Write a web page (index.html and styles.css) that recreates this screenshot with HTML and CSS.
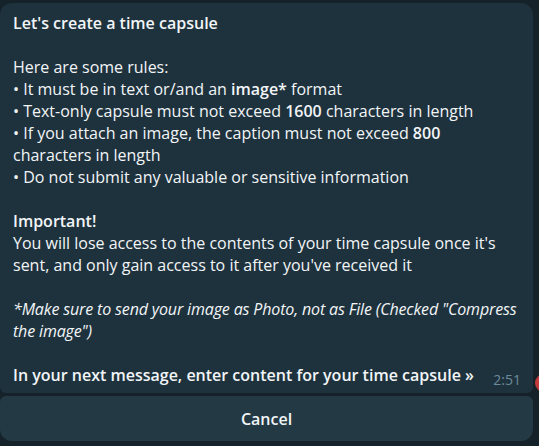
FILE: index.html
```html
<!DOCTYPE html>
<html>
<head>
<meta charset="utf-8">
<link rel="stylesheet" href="styles.css">
</head>
<body>
<div class="chat">
  <div class="msg">
    <div class="bubble">
      <div class="text"><b>Let's create a time capsule</b>

Here are some rules:
• It must be in text or/and an <b>image*</b> format
• Text-only capsule must not exceed <b>1600</b> characters in length
• If you attach an image, the caption must not exceed <b>800</b> characters in length
• Do not submit any valuable or sensitive information

<b>Important!</b>
You will lose access to the contents of your time capsule once it's sent, and only gain access to it after you've received it

<i>*Make sure to send your image as Photo, not as File (Checked "Compress
the image")</i>

<b>In your next message, enter content for your time capsule »</b></div>
      <span class="time">2:51</span>
    </div>
    <div class="keyboard">
      <button class="kbtn">Cancel</button>
    </div>
  </div>
  <div class="side"><span class="dot"></span></div>
</div>
</body>
</html>
```

FILE: styles.css
```css
html, body {
  margin: 0;
  padding: 0;
  background: #15222a;
  width: 539px;
  height: 446px;
  overflow: hidden;
}
.chat {
  display: flex;
  padding-top: 3px;
}
.msg {
  width: 533px;
  display: flex;
  flex-direction: column;
  gap: 3px;
}
.bubble {
  position: relative;
  background: #1e323d;
  border-radius: 12px 12px 6px 6px;
  padding: 9px 12px 7px 13px;
  font-family: "Open Sans", sans-serif;
  font-size: 16px;
  line-height: 22px;
  color: #f2f5f7;
}
.text {
  white-space: pre-wrap;
}
.text b {
  font-weight: 600;
}
.text i {
  letter-spacing: -0.15px;
}
.time {
  position: absolute;
  right: 12px;
  bottom: 2px;
  font-family: "Open Sans", sans-serif;
  font-size: 14px;
  color: #6c8a99;
}
.keyboard {
  display: flex;
}
.kbtn {
  flex: 1;
  height: 45px;
  border: none;
  background: #233944;
  border-radius: 6px 6px 12px 12px;
  font-family: "Open Sans", sans-serif;
  font-size: 16px;
  font-weight: 600;
  color: #f2f5f7;
  padding: 0;
}
.side {
  position: relative;
  width: 6px;
}
.dot {
  position: absolute;
  left: 2px;
  top: 371px;
  width: 18px;
  height: 18px;
  border-radius: 50%;
  background: #c23a3a;
  box-shadow: 0 0 0 2px #15222a;
}
```
